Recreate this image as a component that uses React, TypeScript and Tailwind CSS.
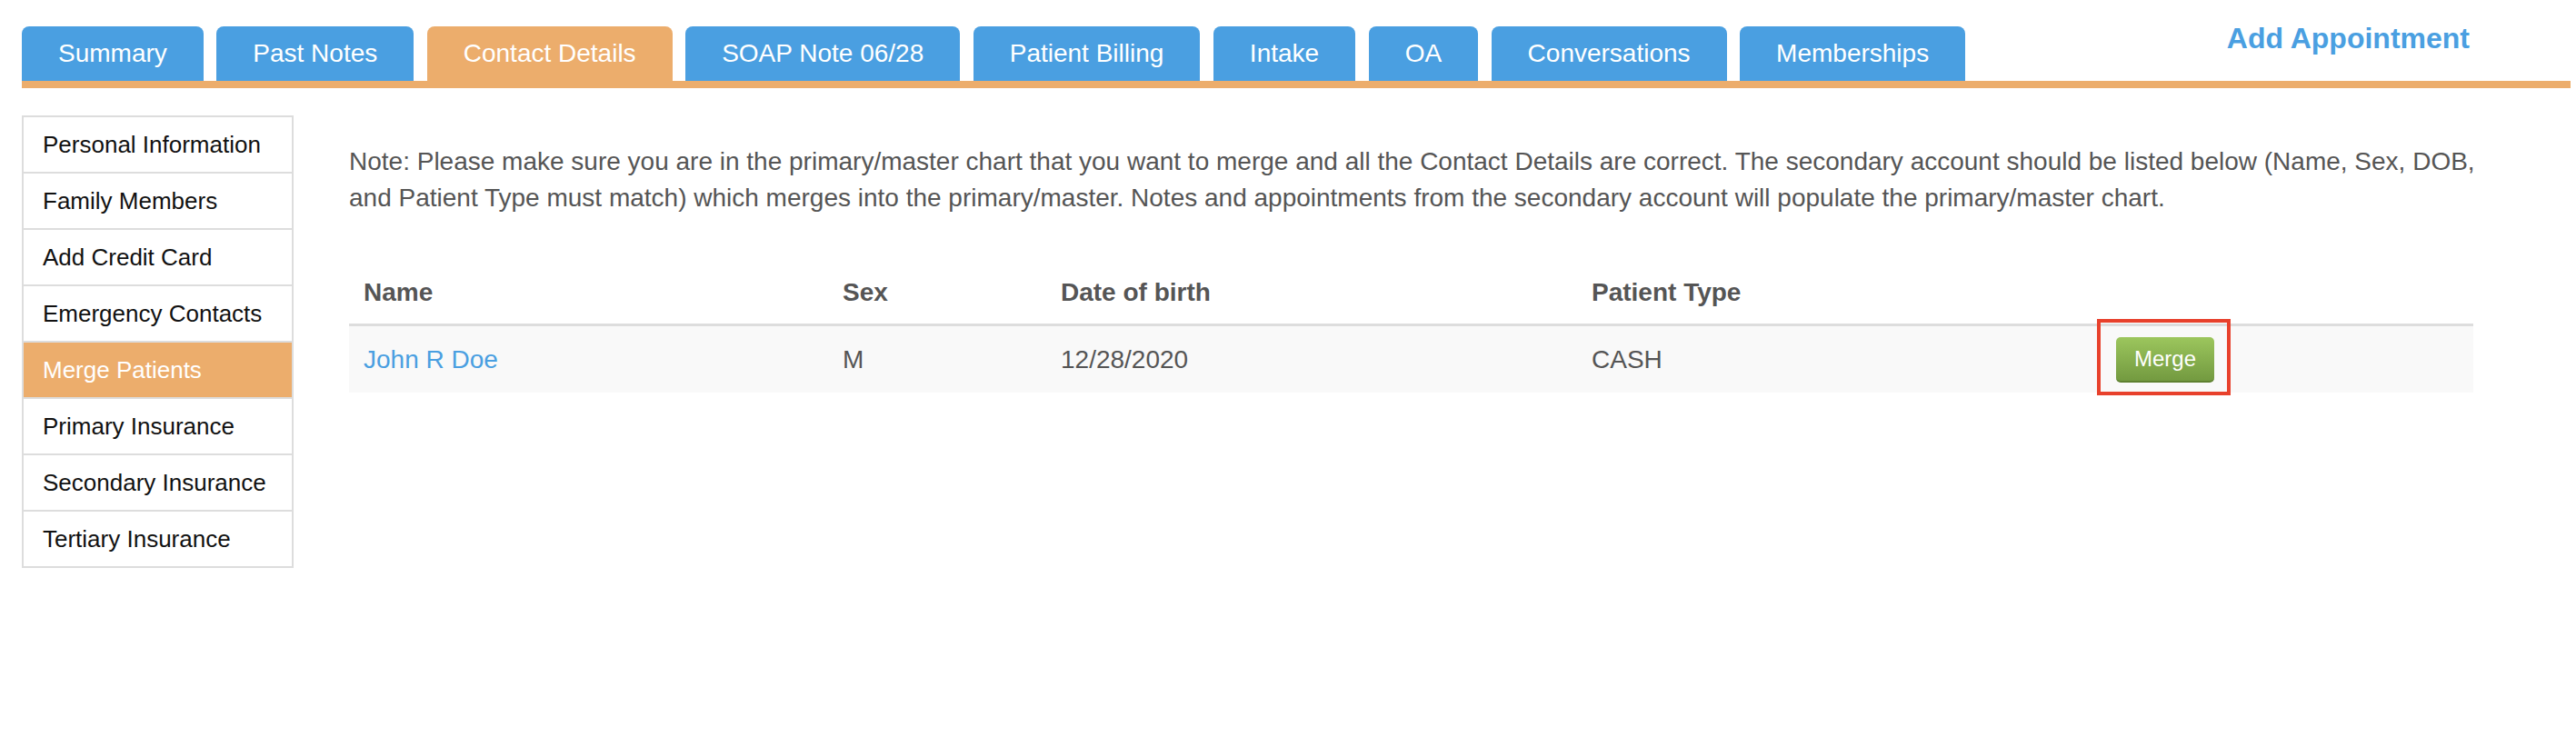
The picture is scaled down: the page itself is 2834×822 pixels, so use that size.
import React from "react";

const tabs = [
  { label: "Summary" },
  { label: "Past Notes" },
  { label: "Contact Details", active: true },
  { label: "SOAP Note 06/28" },
  { label: "Patient Billing" },
  { label: "Intake" },
  { label: "OA" },
  { label: "Conversations" },
  { label: "Memberships" },
];

const sideItems = [
  "Personal Information",
  "Family Members",
  "Add Credit Card",
  "Emergency Contacts",
  "Merge Patients",
  "Primary Insurance",
  "Secondary Insurance",
  "Tertiary Insurance",
];

export default function App() {
  return (
    <div className="w-[2834px] min-h-[822px] bg-white font-['Liberation_Sans',Arial,sans-serif]">
      {/* Top tab bar */}
      <div className="ml-[24px] w-[2804px] flex items-start border-b-[8px] border-[#ecad6c]">
        <div className="mt-[29px] flex gap-[14.5px]">
          {tabs.map((tab) => (
            <div
              key={tab.label}
              className={`h-[60px] px-[40px] rounded-t-[8px] flex items-center text-[28px] text-white whitespace-nowrap ${
                tab.active ? "bg-[#ecad6c]" : "bg-[#4a9fe1]"
              }`}
            >
              {tab.label}
            </div>
          ))}
        </div>
        <div className="ml-auto mr-[111px] mt-[26px] text-[32px] leading-[32px] font-bold text-[#4a9fe1] whitespace-nowrap">
          Add Appointment
        </div>
      </div>

      <div className="flex mt-[30px]">
        {/* Side menu */}
        <ul className="ml-[24px] w-[299px] border-2 border-[#dddddd] divide-y-2 divide-[#dddddd]">
          {sideItems.map((item) => (
            <li
              key={item}
              className={`h-[60px] box-content pl-[21px] flex items-center text-[26px] ${
                item === "Merge Patients" ? "bg-[#ecad6c] text-white" : "text-[#111111]"
              }`}
            >
              {item}
            </li>
          ))}
        </ul>

        {/* Main content */}
        <div className="ml-[61px] mt-[31px]">
          <p className="w-[2362px] text-[28px] leading-[40px] text-[#555555]">
            Note: Please make sure you are in the primary/master chart that you want to merge and all the
            Contact Details are correct. The secondary account should be listed below (Name, Sex, DOB, and
            Patient Type must match) which merges into the primary/master. Notes and appointments from the
            secondary account will populate the primary/master chart.
          </p>

          <div className="mt-[49px] w-[2337px]">
            <div className="grid grid-cols-[527px_240px_584px_576px_1fr] h-[72px] items-center border-b-[3px] border-[#dddddd] text-[28px] font-bold text-[#555555]">
              <div className="pl-[16px]">Name</div>
              <div className="pl-[16px]">Sex</div>
              <div className="pl-[16px]">Date of birth</div>
              <div className="pl-[16px]">Patient Type</div>
              <div></div>
            </div>
            <div className="grid grid-cols-[527px_240px_584px_576px_1fr] h-[73px] items-center bg-[#f9f9f9] text-[28px] text-[#555555]">
              <div className="pl-[16px] text-[#4a9fe1]">John R Doe</div>
              <div className="pl-[16px]">M</div>
              <div className="pl-[16px]">12/28/2020</div>
              <div className="pl-[16px]">CASH</div>
              <div className="pl-[17px] flex">
                <div className="relative">
                  <button className="w-[108px] h-[50px] rounded-[5px] bg-gradient-to-b from-[#9cc65d] to-[#739a40] border-b-2 border-[#5e8030] text-white text-[24px] leading-none flex items-center justify-center">
                    Merge
                  </button>
                  <div className="absolute left-[-21px] top-[-20px] w-[147px] h-[84px] border-4 border-[#e8412c] pointer-events-none"></div>
                </div>
              </div>
            </div>
          </div>
        </div>
      </div>
    </div>
  );
}
